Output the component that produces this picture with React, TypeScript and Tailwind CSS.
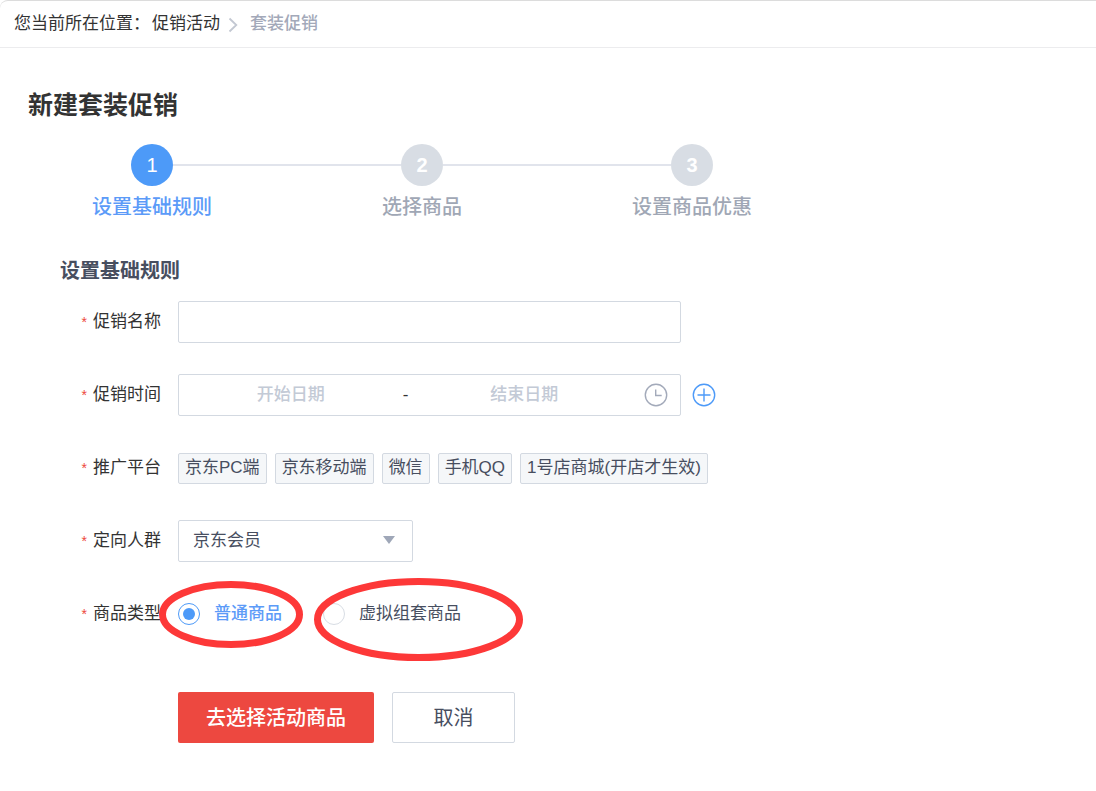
import { useState } from 'react';
import type { ReactNode } from 'react';

const steps = ['设置基础规则', '选择商品', '设置商品优惠'];
const platforms = ['京东PC端', '京东移动端', '微信', '手机QQ', '1号店商城(开店才生效)'];

function Breadcrumb() {
  return (
    <nav
      aria-label="面包屑"
      className="flex h-12 items-center rounded-tl-lg border-t border-b border-t-[#dcdcdc] border-b-[#ececee]"
    >
      <span className="ml-3.5">您当前所在位置：</span>
      <a href="#promotions" className="ml-0.5">
        促销活动
      </a>
      <svg viewBox="0 0 10 16" className="mt-0.5 ml-2 h-4 w-2.5" fill="none" stroke="#c3c8d2" strokeWidth="1.8" aria-hidden="true">
        <path d="M1.5 1.5 8.3 8l-6.8 6.5" />
      </svg>
      <span className="ml-3 font-medium text-[#a3a9b9]" aria-current="page">
        套装促销
      </span>
    </nav>
  );
}

function Stepper({ current }: { current: number }) {
  return (
    <ol className="mt-[21px] ml-[17px] grid max-w-[810px] grid-cols-3">
      {steps.map((label, i) => (
        <li key={label}>
          <div className="flex items-center">
            <span className={i === 0 ? 'h-0.5 flex-1' : 'h-0.5 flex-1 bg-[#e1e4ec]'} />
            <span
              className={
                i === current
                  ? 'flex size-[42px] items-center justify-center rounded-full bg-[#4d9af8] text-xl font-medium text-white'
                  : 'flex size-[42px] items-center justify-center rounded-full bg-[#d8dde4] text-xl font-bold text-white'
              }
            >
              {i + 1}
            </span>
            <span className={i === steps.length - 1 ? 'h-0.5 flex-1' : 'h-0.5 flex-1 bg-[#e1e4ec]'} />
          </div>
          <p
            className={
              i === current
                ? 'mt-[7px] text-center text-xl font-medium text-[#5c9bf8]'
                : 'mt-[7px] text-center text-xl font-medium text-[#a0a7b5]'
            }
          >
            {label}
          </p>
        </li>
      ))}
    </ol>
  );
}

function Row({ label, htmlFor, id, children }: { label: string; htmlFor?: string; id?: string; children: ReactNode }) {
  const text = (
    <>
      <span className="mr-1.5 text-sm text-[#ed4840]">*</span>
      {label}
    </>
  );
  return (
    <div className="flex min-h-[42px] items-center gap-[17px]">
      {htmlFor ? (
        <label htmlFor={htmlFor} className="w-[161px] shrink-0 text-right">
          {text}
        </label>
      ) : (
        <span id={id} className="w-[161px] shrink-0 text-right">
          {text}
        </span>
      )}
      {children}
    </div>
  );
}

const radioClass =
  "flex size-[22px] shrink-0 appearance-none items-center justify-center rounded-full border border-[#d8dde4] bg-white checked:border-[#4d9af8] checked:before:size-3 checked:before:rounded-full checked:before:bg-[#4d9af8] checked:before:content-['']";

export default function App() {
  const [selected, setSelected] = useState<string[]>([]);
  const [kind, setKind] = useState('normal');

  const toggle = (name: string) =>
    setSelected((list) => (list.includes(name) ? list.filter((n) => n !== name) : [...list, name]));

  return (
    <div className="min-h-screen bg-white pb-12 font-['Liberation_Sans','Noto_Sans_CJK_SC',sans-serif] text-[17px] leading-6 text-[#333]">
      <Breadcrumb />
      <main>
        <h1 className="mt-[39px] px-7 text-[25px] leading-9 font-bold">新建套装促销</h1>
        <Stepper current={0} />

        <form onSubmit={(e) => e.preventDefault()}>
          <h2 className="mt-9 pl-[60px] text-xl leading-7 font-bold text-[#474e5f]">设置基础规则</h2>

          <div className="mt-4 flex flex-col gap-[31px]">
            <Row label="促销名称" htmlFor="promo-name">
              <input
                id="promo-name"
                type="text"
                className="h-[42px] w-full max-w-[503px] rounded-xs border border-[#d3d9e1] px-3.5 outline-none focus:border-[#4d9af8]"
              />
            </Row>

            <Row label="促销时间" htmlFor="start-date">
              <div className="flex h-[42px] w-full max-w-[503px] items-center rounded-xs border border-[#d3d9e1]">
                <input
                  id="start-date"
                  type="text"
                  placeholder="开始日期"
                  className="min-w-0 flex-1 text-center font-medium outline-none placeholder:text-[#c3cad6]"
                />
                <span>-</span>
                <input
                  type="text"
                  aria-label="结束日期"
                  placeholder="结束日期"
                  className="min-w-0 flex-1 pl-1 text-center font-medium outline-none placeholder:text-[#c3cad6]"
                />
                <svg viewBox="0 0 24 24" className="mr-3 ml-2 size-6 shrink-0" fill="none" stroke="#a3aaba" strokeWidth="1.4" aria-hidden="true">
                  <circle cx="12" cy="12" r="10.7" />
                  <path d="M11.7 6.5v6h6" />
                </svg>
              </div>
              <button type="button" aria-label="添加时间" className="-ml-1.5 shrink-0">
                <svg viewBox="0 0 24 24" className="size-6" fill="none" stroke="#4d9af8" strokeWidth="1.4">
                  <circle cx="12" cy="12" r="10.7" />
                  <path d="M12 5.5v13M5.5 12h13" />
                </svg>
              </button>
            </Row>

            <Row label="推广平台" id="platform-label">
              <div role="group" aria-labelledby="platform-label" className="flex flex-wrap gap-2">
                {platforms.map((name) => (
                  <button
                    key={name}
                    type="button"
                    aria-pressed={selected.includes(name)}
                    onClick={() => toggle(name)}
                    className="h-[31px] rounded-xs border border-[#d3d9e1] bg-[#f5f7f9] px-1.5 text-[#474e5f] aria-pressed:border-[#4d9af8] aria-pressed:text-[#4d9af8]"
                  >
                    {name}
                  </button>
                ))}
              </div>
            </Row>

            <Row label="定向人群" htmlFor="audience">
              <div className="relative w-full max-w-[235px]">
                <select
                  id="audience"
                  defaultValue="member"
                  className="h-[42px] w-full appearance-none rounded-xs border border-[#d3d9e1] bg-white pr-10 pl-3.5 text-[#474e5f] outline-none"
                >
                  <option value="member">京东会员</option>
                </select>
                <svg
                  viewBox="0 0 12 8"
                  className="pointer-events-none absolute top-4 right-[18px] h-2 w-3"
                  fill="#9fa7b8"
                  aria-hidden="true"
                >
                  <path d="M0 0h12L6 8z" />
                </svg>
              </div>
            </Row>

            <Row label="商品类型" id="kind-label">
              <div role="radiogroup" aria-labelledby="kind-label" className="flex gap-[41px]">
                <label className="relative flex h-[42px] items-center gap-3.5 text-[#474e5f] has-checked:font-medium has-checked:text-[#5c9bf8]">
                  <input
                    type="radio"
                    name="kind"
                    checked={kind === 'normal'}
                    onChange={() => setKind('normal')}
                    className={radioClass}
                  />
                  普通商品
                  <svg
                    viewBox="0 0 144 67"
                    className="pointer-events-none absolute -top-3 -left-[19px] h-[67px] w-36 max-w-none"
                    fill="none"
                    stroke="#fd3838"
                    strokeWidth="7"
                    aria-hidden="true"
                  >
                    <ellipse cx="72" cy="33.5" rx="68.5" ry="30" />
                  </svg>
                </label>
                <label className="relative flex h-[42px] items-center gap-3.5 text-[#474e5f] has-checked:font-medium has-checked:text-[#5c9bf8]">
                  <input
                    type="radio"
                    name="kind"
                    checked={kind === 'virtual'}
                    onChange={() => setKind('virtual')}
                    className={radioClass}
                  />
                  虚拟组套商品
                  <svg
                    viewBox="0 0 209 83"
                    className="pointer-events-none absolute -top-[15px] -left-[9px] h-[83px] w-[209px] max-w-none"
                    fill="none"
                    stroke="#fd3838"
                    strokeWidth="7"
                    aria-hidden="true"
                  >
                    <ellipse cx="104.5" cy="41.5" rx="101" ry="38" />
                  </svg>
                </label>
              </div>
            </Row>
          </div>

          <div className="mt-[57px] flex gap-[18px] pl-[178px] text-xl">
            <button type="submit" className="h-[51px] w-[196px] rounded-xs bg-[#ed4840] font-medium text-white">
              去选择活动商品
            </button>
            <button type="button" className="h-[51px] w-[123px] rounded-xs border border-[#d3d9e1] bg-white text-[#474e5f]">
              取消
            </button>
          </div>
        </form>
      </main>
    </div>
  );
}
